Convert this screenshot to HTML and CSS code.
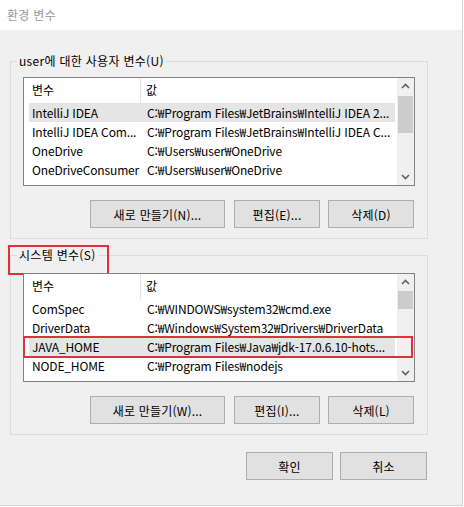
FILE: index.html
```html
<!DOCTYPE html>
<html lang="ko">
<head>
<meta charset="utf-8">
<title>환경 변수</title>
<link rel="stylesheet" href="styles.css">
</head>
<body>
<div class="window">
  <div class="titlebar">환경 변수</div>
  <div class="content">
    <fieldset class="group group-user">
      <legend>user에 대한 사용자 변수(U)</legend>
      <div class="list">
        <div class="list-body">
          <div class="list-head"><span class="c1">변수</span><span class="c2">값</span></div>
          <div class="row sel"><span class="c1">IntelliJ IDEA</span><span class="c2">C:₩Program Files₩JetBrains₩IntelliJ IDEA 2...</span></div>
          <div class="row"><span class="c1">IntelliJ IDEA Com...</span><span class="c2">C:₩Program Files₩JetBrains₩IntelliJ IDEA C...</span></div>
          <div class="row"><span class="c1">OneDrive</span><span class="c2">C:₩Users₩user₩OneDrive</span></div>
          <div class="row"><span class="c1">OneDriveConsumer</span><span class="c2">C:₩Users₩user₩OneDrive</span></div>
        </div>
        <div class="scrollbar">
          <div class="sb-btn"><svg width="17" height="17" viewBox="0 0 17 17"><polyline points="5,10 8.5,6.5 12,10" fill="none" stroke="#606060" stroke-width="1.6"/></svg></div>
          <div class="sb-track"><div class="thumb thumb-user"></div></div>
          <div class="sb-btn"><svg width="17" height="17" viewBox="0 0 17 17"><polyline points="5,7 8.5,10.5 12,7" fill="none" stroke="#606060" stroke-width="1.6"/></svg></div>
        </div>
      </div>
      <div class="btns">
        <button class="btn wide">새로 만들기(N)...</button>
        <button class="btn">편집(E)...</button>
        <button class="btn">삭제(D)</button>
      </div>
    </fieldset>

    <fieldset class="group group-sys">
      <legend class="marked">시스템 변수(S)</legend>
      <div class="list">
        <div class="list-body">
          <div class="list-head"><span class="c1">변수</span><span class="c2">값</span></div>
          <div class="row"><span class="c1">ComSpec</span><span class="c2">C:₩WINDOWS₩system32₩cmd.exe</span></div>
          <div class="row"><span class="c1">DriverData</span><span class="c2">C:₩Windows₩System32₩Drivers₩DriverData</span></div>
          <div class="row sel"><span class="c1">JAVA_HOME</span><span class="c2">C:₩Program Files₩Java₩jdk-17.0.6.10-hots...</span></div>
          <div class="row"><span class="c1">NODE_HOME</span><span class="c2">C:₩Program Files₩nodejs</span></div>
        </div>
        <div class="scrollbar">
          <div class="sb-btn"><svg width="17" height="17" viewBox="0 0 17 17"><polyline points="5,10 8.5,6.5 12,10" fill="none" stroke="#606060" stroke-width="1.6"/></svg></div>
          <div class="sb-track"><div class="thumb thumb-sys"></div></div>
          <div class="sb-btn"><svg width="17" height="17" viewBox="0 0 17 17"><polyline points="5,7 8.5,10.5 12,7" fill="none" stroke="#606060" stroke-width="1.6"/></svg></div>
        </div>
        <div class="row-mark"></div>
      </div>
      <div class="btns">
        <button class="btn wide">새로 만들기(W)...</button>
        <button class="btn">편집(I)...</button>
        <button class="btn">삭제(L)</button>
      </div>
    </fieldset>

    <div class="dialog-btns">
      <button class="btn ok">확인</button>
      <button class="btn ok">취소</button>
    </div>
  </div>
</div>
</body>
</html>
```

FILE: styles.css
```css
* { box-sizing: border-box; }
html, body {
  margin: 0;
  padding: 0;
  background: #ffffff;
}
body {
  font-family: "Noto Sans CJK KR", "Noto Sans", sans-serif;
  font-size: 12px;
  color: #000;
}
.window {
  width: 463px;
  height: 506px;
  background: #f0f0f0;
  border-right: 1px solid #d2d2d2;
  border-bottom: 1px solid #d2d2d2;
  display: flex;
  flex-direction: column;
}
.titlebar {
  height: 30px;
  background: #ffffff;
  color: #999999;
  line-height: 29px;
  padding-left: 7px;
  letter-spacing: 0.3px;
}
.content {
  padding: 23px 0 0 10px;
  display: flex;
  flex-direction: column;
}
.group {
  width: 418px;
  margin: 0;
  border: 1px solid #dcdcdc;
  padding: 8px 12px 10px 12px;
  min-width: 0;
}
.group legend {
  line-height: 16px;
  padding: 0 2px;
  margin-left: -6px;
  letter-spacing: 0.3px;
}
.group-sys {
  margin-top: 8px;
  padding-top: 10px;
}
.marked { position: relative; }
.marked::after {
  content: "";
  position: absolute;
  left: -9px;
  top: -2px;
  width: 97px;
  height: 26px;
  border: 2px solid #e0303e;
}
.list {
  position: relative;
  height: 109px;
  border: 1px solid #828282;
  background: #ffffff;
  display: flex;
}
.list-body {
  flex: 1;
  overflow: hidden;
}
.list-head {
  height: 25px;
  display: grid;
  grid-template-columns: 117px 1fr;
  line-height: 24px;
}
.list-head .c1 {
  padding-left: 8px;
  border-right: 1px solid #e5e5e5;
}
.list-head .c2 { padding-left: 5px; }
.row {
  height: 19px;
  line-height: 19px;
  margin: 0 2px 0 5px;
  display: grid;
  grid-template-columns: 112px 1fr;
  white-space: nowrap;
  letter-spacing: -0.15px;
}
.row .c1 { padding-left: 3px; overflow: hidden; }
.row .c2 { padding-left: 6px; overflow: hidden; }
.row.sel { background: #e5e5e5; }
.scrollbar {
  width: 17px;
  background: #f0f0f0;
  display: flex;
  flex-direction: column;
}
.sb-btn { height: 17px; }
.sb-btn svg { display: block; }
.sb-track { flex: 1; padding: 0 1px; }
.thumb { background: #cdcdcd; }
.thumb-user { margin-top: 1px; height: 37px; }
.thumb-sys { margin-top: 0; height: 18px; }
.row-mark {
  position: absolute;
  left: -1px;
  top: 62px;
  width: 390px;
  height: 22px;
  border: 2px solid #e0303e;
}
.btns {
  margin-top: 14px;
  display: flex;
  justify-content: flex-end;
  padding-right: 1px;
}
.btn {
  font: inherit;
  color: #000;
  height: 28px;
  width: 86px;
  background: #e1e1e1;
  border: 1px solid #adadad;
  border-radius: 0;
  padding: 0;
  margin: 0;
  letter-spacing: 0.2px;
}
.btn + .btn { margin-left: 8px; }
.btn.wide { width: 135px; margin-right: 1px; }
.dialog-btns {
  width: 418px;
  margin-top: 17px;
  display: flex;
  justify-content: flex-end;
  padding-right: 1px;
}
.btn.ok { width: 87px; }
.btn.ok + .btn.ok { margin-left: 7px; }
```
